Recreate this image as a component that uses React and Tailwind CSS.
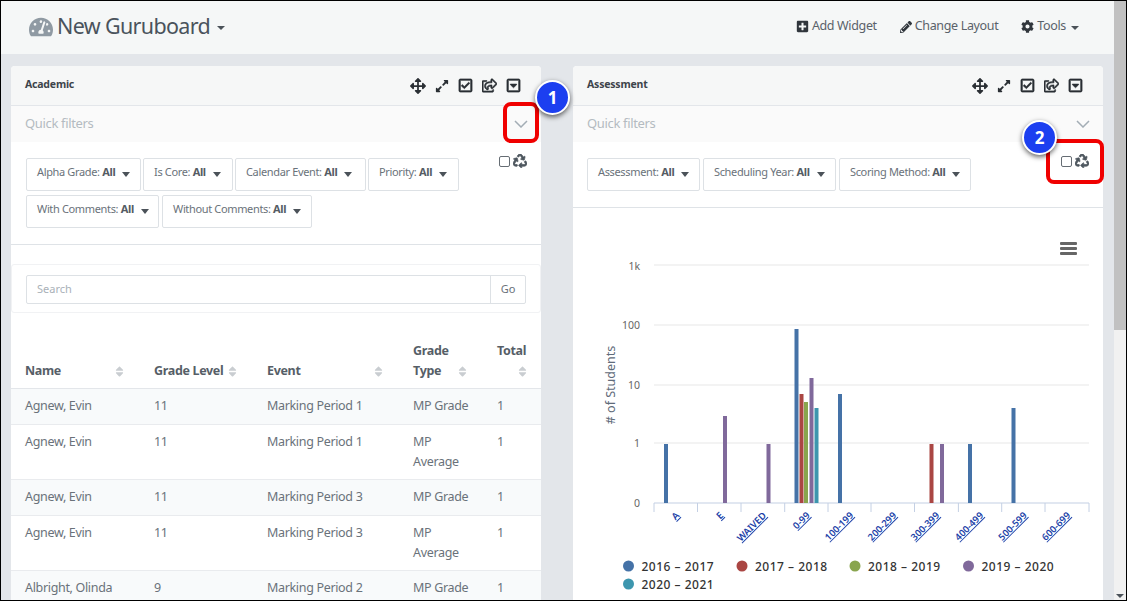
import React from 'react';
import { FaTachometerAlt, FaArrowsAlt, FaExpandAlt, FaRegCheckSquare, FaRegShareSquare, FaRegCaretSquareDown, FaPlusSquare, FaPencilAlt, FaCog, FaRecycle, FaSort } from 'react-icons/fa';

const Caret = ({ className = '' }) => (
  <span className={`inline-block w-0 h-0 border-x-[4px] border-x-transparent border-t-[4px] border-t-[#4b5259] ${className}`} />
);

const Chevron = () => (
  <svg width="14" height="8" viewBox="0 0 14 8" fill="none" stroke="#a3adb5" strokeWidth="1.5"><path d="M1 1l6 6 6-6" /></svg>
);

const FilterBtn = ({ label, w }) => (
  <div className={`${w} h-[33px] border border-[#dde1e5] rounded-[2px] bg-white flex items-center pl-[10px] pb-[4px] text-[11px] tracking-[-0.35px] text-[#6a727a] whitespace-nowrap`}>
    <span>{label}: <b className="font-bold text-[#555c64]">All</b></span>
    <Caret className="ml-[7px] mt-[3px] border-x-[4.5px] border-t-[5px]" />
  </div>
);

const PanelHead = ({ title }) => (
  <>
    <div className="h-[40px] bg-[#f6f7f7] border-b border-[#e3e6ea] rounded-t-[4px] flex items-center justify-between pl-[14px] pr-[16px]">
      <span className="text-[10.5px] font-bold tracking-[-0.2px] text-[#3d444b] pb-[1px]">{title}</span>
      <div className="flex items-center text-[#2a2f34] text-[15px]">
        <span className="w-[24px] flex justify-center"><FaArrowsAlt className="text-[16px]" /></span>
        <span className="w-[23px] flex justify-center"><FaExpandAlt className="text-[14px]" /></span>
        <span className="w-[24px] flex justify-center"><FaRegCheckSquare stroke="currentColor" strokeWidth="22" /></span>
        <span className="w-[24px] flex justify-center"><FaRegShareSquare stroke="currentColor" strokeWidth="22" /></span>
        <span className="w-[24px] flex justify-center"><FaRegCaretSquareDown stroke="currentColor" strokeWidth="22" /></span>
      </div>
    </div>
    <div className="h-[36px] bg-[#fafafa] flex items-center justify-between pl-[14px] pr-[13px]">
      <span className="text-[13px] tracking-[-0.35px] text-[#b4bbc1]">Quick filters</span>
      <Chevron />
    </div>
  </>
);

const Th = ({ children, w }) => (
  <th className={`${w} p-0 pl-[14px] pr-[14px] pb-[7px] pt-0 align-bottom text-left font-bold text-[#565e67] leading-[20px]`}>
    <div className="flex items-end justify-between">
      <span>{children}</span>
      <FaSort className="text-[#c9cdd1] text-[13px] mb-[3px] shrink-0" />
    </div>
  </th>
);

const rows = [
  ['Agnew, Evin', '11', 'Marking Period 1', 'MP Grade', true],
  ['Agnew, Evin', '11', 'Marking Period 1', 'MP Average', false],
  ['Agnew, Evin', '11', 'Marking Period 3', 'MP Grade', true],
  ['Agnew, Evin', '11', 'Marking Period 3', 'MP Average', false],
  ['Albright, Olinda', '9', 'Marking Period 2', 'MP Grade', true],
];

const bars = [
  [664, 444, '#4572a7'], [723, 416, '#80699b'], [766.5, 444, '#80699b'],
  [794.5, 329, '#4572a7'], [799.5, 394, '#aa4643'], [804, 402, '#89a54e'], [809.5, 378, '#80699b'], [814.5, 408, '#3d96ae'],
  [838, 394, '#4572a7'], [929.5, 444, '#aa4643'], [940, 444, '#80699b'], [968, 444, '#4572a7'], [1011.5, 408, '#4572a7'],
];
const ticks = [654, 697.5, 741, 784.7, 828, 871, 914.5, 958.4, 1001.7, 1045, 1089];
const xlabels = [['A', 680], ['E', 724], ['WAIVED', 767], ['0-99', 810.5], ['100-199', 854], ['200-299', 897], ['300-399', 940], ['400-499', 984], ['500-599', 1027.5], ['600-699', 1071]];
const legend = [
  ['2016 – 2017', 628.5, 566, '#4572a7'], ['2017 – 2018', 742, 566, '#aa4643'], ['2018 – 2019', 855, 566, '#89a54e'],
  ['2019 – 2020', 968.5, 566, '#80699b'], ['2020 – 2021', 628.5, 584, '#3d96ae'],
];
const ylabels = [['1k', 266], ['100', 325], ['10', 385], ['1', 443], ['0', 503]];

const Chart = () => (
  <svg width="530" height="393" viewBox="573 208 530 393" className="block" fontFamily="'Noto Sans', sans-serif">
    {[265, 325, 385, 443].map((y) => <line key={y} x1="654" x2="1089" y1={y} y2={y} stroke="#efefef" strokeWidth="1.5" />)}
    <line x1="654" x2="1089" y1="503" y2="503" stroke="#c4d0e4" strokeWidth="1.2" />
    {ticks.map((x) => <line key={x} x1={x} x2={x} y1="503" y2="512" stroke="#c4d0e4" />)}
    {bars.map(([x, y, c], i) => <rect key={i} x={x} y={y} width="4" height={503 - y} fill={c} />)}
    {ylabels.map(([t, y]) => <text key={t} x="640" y={y + 4} textAnchor="end" fontSize="10.5" fill="#666">{t}</text>)}
    <text transform="translate(615 385) rotate(-90)" textAnchor="middle" fontSize="12.5" fill="#5f6b7a">{'# of Students'}</text>
    {xlabels.map(([t, x]) => (
      <text key={t} transform={`translate(${x} 516) rotate(-45)`} textAnchor="end" fontSize="9.5" fontWeight="600" fill="#1c3fa8" textDecoration="underline">{t}</text>
    ))}
    {legend.map(([t, x, y, c]) => (
      <g key={t}>
        <circle cx={x} cy={y} r="5.5" fill={c} />
        <text x={x + 13} y={y + 4.5} fontSize="12" fontWeight="500" fill="#333" letterSpacing="0.5">{t}</text>
      </g>
    ))}
    <rect x="1060" y="242" width="17" height="3" rx="1" fill="#666" />
    <rect x="1060" y="247" width="17" height="3" rx="1" fill="#666" />
    <rect x="1060" y="252" width="17" height="3" rx="1" fill="#666" />
  </svg>
);

const Badge = ({ n, className }) => (
  <div className={`absolute w-[35px] h-[35px] rounded-full bg-[#1c3ff0] border-2 border-white shadow-[0_2px_5px_rgba(0,0,0,0.6)] text-white font-bold text-[17px] flex items-center justify-center ${className}`}>{n}</div>
);

export default function App() {
  return (
    <div className="relative w-[1127px] h-[601px] overflow-hidden border border-black flex bg-white" style={{ fontFamily: "'Noto Sans', sans-serif" }}>
      <div className="flex-1 min-w-0 flex flex-col bg-[#e3e6ea]">
        <header className="h-[53px] shrink-0 bg-[#f5f7f7] flex items-center justify-between pl-[28px] pr-[35px]">
          <div className="flex items-center text-[#4a535c] pb-[2px]">
            <FaTachometerAlt className="text-[24px] text-[#8f9aa3] mr-[4px]" />
            <span className="text-[21.5px] tracking-[-0.65px]">New Guruboard</span>
            <Caret className="ml-[7px] mt-[3px]" />
          </div>
          <div className="flex items-center text-[12.5px] tracking-[-0.35px] text-[#5a626a] pb-[2px]">
            <FaPlusSquare className="text-[#30363c] text-[13px] mr-[3px]" />Add Widget
            <FaPencilAlt className="text-[#30363c] text-[12px] ml-[23px] mr-[3px]" />Change Layout
            <FaCog className="text-[#30363c] text-[13px] ml-[23px] mr-[3px]" />Tools
            <Caret className="ml-[5px] mt-[2px]" />
          </div>
        </header>
        <main className="flex-1 min-h-0 overflow-hidden flex gap-[32px] pl-[10px] pr-[11px] pt-[12px]">
          <section className="w-[530px] bg-white rounded-t-[4px] shrink-0">
            <PanelHead title="Academic" />
            <div className="h-[103px] border-b border-[#dfe3e7] pl-[15px] pr-[14px] pt-[16px] flex justify-between">
              <div className="flex flex-col gap-[4px]">
                <div className="flex gap-[2px]">
                  <FilterBtn label="Alpha Grade" w="w-[115px]" />
                  <FilterBtn label="Is Core" w="w-[90px]" />
                  <FilterBtn label="Calendar Event" w="w-[131px]" />
                  <FilterBtn label="Priority" w="w-[91px]" />
                </div>
                <div className="flex gap-[3px]">
                  <FilterBtn label="With Comments" w="w-[133px]" />
                  <FilterBtn label="Without Comments" w="w-[150px]" />
                </div>
              </div>
              <div className="flex items-start gap-[3px] text-[#4d565e]">
                <span className="w-[11px] h-[11px] -mt-[2px] border border-[#666d74] rounded-[2px] bg-white" />
                <FaRecycle className="text-[14px] -mt-[4px]" stroke="currentColor" strokeWidth="25" />
              </div>
            </div>
            <div className="mt-[19px] h-[49px] border border-[#f1f2f4] rounded-[3px] pl-[14px] pr-[14px] pt-[10px]">
              <div className="h-[29px] flex border border-[#dde1e5] rounded-[2px] text-[11px]">
                <div className="flex-1 pl-[10px] flex items-center text-[#a9b1b8]">Search</div>
                <div className="w-[35px] border-l border-[#dde1e5] flex items-center justify-center text-[#6a727a]">Go</div>
              </div>
            </div>
            <table className="mt-[28px] w-[530px] table-fixed border-collapse text-[12.5px] tracking-[-0.33px] text-[#6a727a]">
              <thead>
                <tr className="border-b border-[#e3e6ea]">
                  <Th w="w-[129px]">Name</Th>
                  <Th w="w-[113px]">Grade Level</Th>
                  <Th w="w-[146px]">Event</Th>
                  <Th w="w-[84px]">Grade Type</Th>
                  <th className="w-[58px] pl-[14px] pr-[12px] pb-[7px] align-bottom text-left font-bold text-[#565e67] leading-[20px]">
                    <div className="flex flex-col">
                      <span>Total</span>
                      <FaSort className="text-[#c9cdd1] text-[13px] mt-[4px] mb-[3px] self-end" />
                    </div>
                  </th>
                </tr>
              </thead>
              <tbody>
                {rows.map((r, i) => {
                  const pad = r[4] ? 'pt-[7px] pb-[8px]' : 'py-[7px]';
                  return (
                    <tr key={i} className={`border-b border-[#e9ebee] leading-[20px] align-top ${r[4] ? 'bg-[#f8fafb]' : 'bg-white'}`}>
                      <td className={`pl-[14px] ${pad}`}>{r[0]}</td>
                      <td className={`pl-[14px] ${pad}`}>{r[1]}</td>
                      <td className={`pl-[14px] ${pad}`}>{r[2]}</td>
                      <td className={`pl-[14px] pr-[4px] ${pad}`}>{r[3]}</td>
                      <td className={`pl-[14px] ${pad}`}>1</td>
                    </tr>
                  );
                })}
              </tbody>
            </table>
          </section>
          <section className="w-[530px] bg-white rounded-t-[4px] shrink-0">
            <PanelHead title="Assessment" />
            <div className="h-[66px] border-b border-[#dfe3e7] pl-[14px] pr-[14px] pt-[16px] flex justify-between">
              <div className="flex gap-[3px]">
                <FilterBtn label="Assessment" w="w-[113px]" />
                <FilterBtn label="Scheduling Year" w="w-[133px]" />
                <FilterBtn label="Scoring Method" w="w-[132px]" />
              </div>
              <div className="flex items-start gap-[3px] text-[#4d565e]">
                <span className="w-[11px] h-[11px] -mt-[2px] border border-[#666d74] rounded-[2px] bg-white" />
                <FaRecycle className="text-[14px] -mt-[4px]" stroke="currentColor" strokeWidth="25" />
              </div>
            </div>
            <Chart />
          </section>
        </main>
      </div>
      <div className="w-[12px] shrink-0 bg-[#f1f1f1] flex flex-col justify-between">
        <div className="h-[329px] bg-[#c1c1c1]" />
        <Caret className="self-center mb-[2px]" />
      </div>
      <div className="absolute left-[502px] top-[101px] w-[36px] h-[41px] border-[4px] border-[#f00000] rounded-[8px]" />
      <div className="absolute left-[1045px] top-[138px] w-[58px] h-[45px] border-[4px] border-[#f00000] rounded-[8px]" />
      <Badge n="1" className="left-[534px] top-[79px]" />
      <Badge n="2" className="left-[1021px] top-[119px]" />
    </div>
  );
}
